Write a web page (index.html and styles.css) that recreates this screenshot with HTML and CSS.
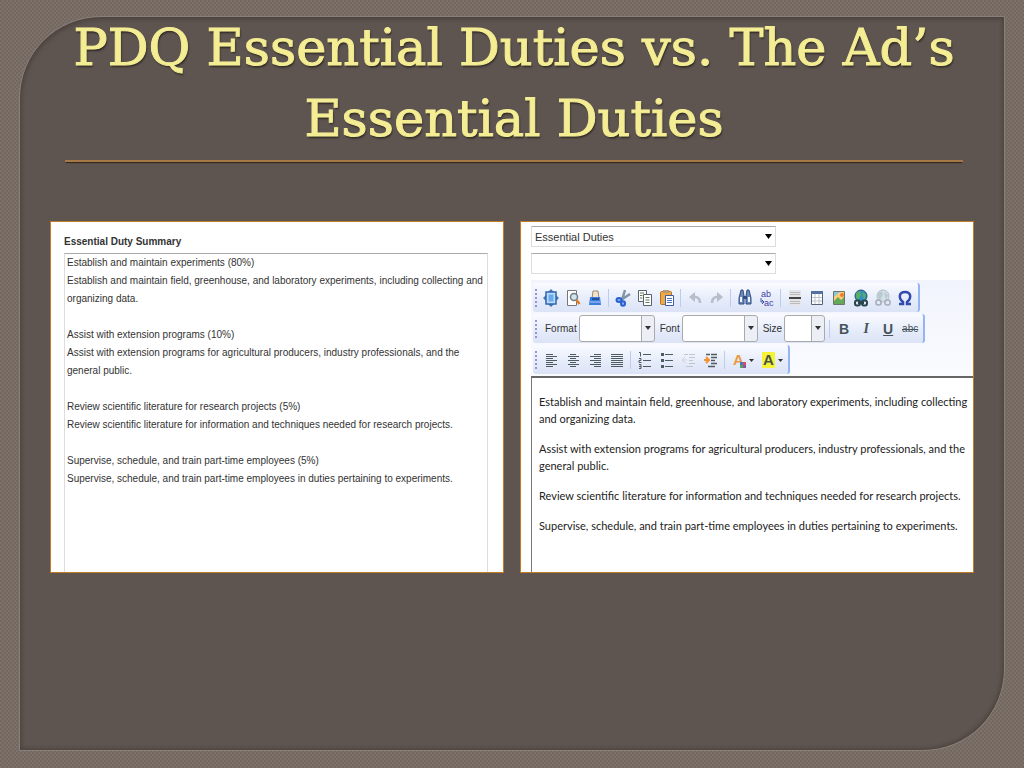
FILE: index.html
```
<!DOCTYPE html>
<html lang="en">
<head>
    <meta charset="UTF-8">
    <meta name="viewport" content="width=device-width, initial-scale=1.0">
    <title>PDQ Essential Duties vs. The Ad’s Essential Duties</title>
    <link rel="stylesheet" href="styles.css">
</head>
<body>
    <main class="slide">
        <h1 class="title">PDQ Essential Duties vs. The Ad’s Essential Duties</h1>

        <div class="panels">
            <!-- Summary from the PDQ -->
            <section class="panel summary">
                <label for="dutySummary">Essential Duty Summary</label>
                <textarea id="dutySummary" spellcheck="false">Establish and maintain experiments (80%)
Establish and maintain field, greenhouse, and laboratory experiments, including collecting and organizing data.

Assist with extension programs (10%)
Assist with extension programs for agricultural producers, industry professionals, and the general public.

Review scientific literature for research projects (5%)
Review scientific literature for information and techniques needed for research projects.

Supervise, schedule, and train part-time employees (5%)
Supervise, schedule, and train part-time employees in duties pertaining to experiments.</textarea>
            </section>

            <!-- Editor for the ad -->
            <section class="panel editor">
                <div class="fields">
                    <select class="field" aria-label="Section">
                        <option>Essential Duties</option>
                    </select>
                    <select class="field" aria-label="Template">
                        <option></option>
                    </select>
                </div>

                <div class="toolbars">
                    <div class="toolbar">
                        <button class="tool" aria-label="Maximize"><svg viewBox="0 0 16 18"><path d="M8 0l3 3H5zM8 18l3-3H5zM0 9l3-3v6zM16 9l-3-3v6z" fill="#3e79b8"/><rect x="3" y="3" width="10" height="12" fill="#b9dcff" stroke="#3566ae" stroke-width="1.5"/><rect x="5.5" y="5.5" width="5" height="7" fill="#6caaf0"/></svg></button>
                        <button class="tool" aria-label="Preview"><svg viewBox="0 0 16 18"><path d="M2.5 1.5h9v15h-9z" fill="#fff" stroke="#777"/><circle cx="9" cy="8" r="3.5" fill="#d5e3ea" stroke="#6c7f86" stroke-width="1.5"/><path d="M11.5 11l3 4" stroke="#e17b23" stroke-width="2.5"/></svg></button>
                        <button class="tool" aria-label="Print"><svg viewBox="0 0 16 18"><path d="M6 2h5l1 8H5z" fill="#f5e2c8" stroke="#9b8a79"/><path d="M3 8h10l1 8H2z" fill="#3f7ddd"/><path d="M5 9h7v2H5z" fill="#24509c"/><path d="M3 13h10" stroke="#a9d0ff"/></svg></button>
                        <span class="divider"></span>
                        <button class="tool" aria-label="Cut"><svg viewBox="0 0 16 18"><path d="M10 1L7 11M15 5l-9 6" stroke="#8194a8" stroke-width="2.5" fill="none"/><ellipse cx="4" cy="11" rx="2.5" ry="2" fill="#8bb0ee" stroke="#2962ce" stroke-width="2"/><ellipse cx="8" cy="14.500" rx="2" ry="2.300" fill="#8bb0ee" stroke="#2962ce" stroke-width="2"/></svg></button>
                        <button class="tool" aria-label="Copy"><svg viewBox="0 0 16 18"><g fill="#fff" stroke="#59646a"><path d="M1.5 1.5h8v11h-8z"/><path d="M6.5 5.5h8v11h-8z"/></g><path d="M3 4h4M3 6.5h2.500M3 9h2.500M8.500 8.500h4M8.500 11h4M8.500 13.500h4" stroke="#617956"/></svg></button>
                        <button class="tool" aria-label="Paste"><svg viewBox="0 0 16 18"><rect x="1.5" y="2.5" width="11" height="13" rx="1" fill="#eda848" stroke="#b57424"/><path d="M4 1h6v3H4z" fill="#b99a77"/><path d="M6.5 6.5h8v10h-8z" fill="#fff" stroke="#3e5da5"/><path d="M8 9.500h5M8 11.500h5M8 13.500h5" stroke="#4b76bd"/></svg></button>
                        <span class="divider"></span>
                        <button class="tool" aria-label="Undo" disabled><svg viewBox="0 0 16 18"><path d="M4 8h5q4 1 4 6" fill="none" stroke="#b8bdc9" stroke-width="2.5"/><path d="M8 3L2 8l6 5z" fill="#b8bdc9"/></svg></button>
                        <button class="tool" aria-label="Redo" disabled><svg viewBox="0 0 16 18"><path d="M12 8H7q-4 1-4 6" fill="none" stroke="#b8bdc9" stroke-width="2.5"/><path d="M8 3l6 5-6 5z" fill="#b8bdc9"/></svg></button>
                        <span class="divider"></span>
                        <button class="tool" aria-label="Find"><svg viewBox="0 0 16 18"><path d="M4 1h2l1 6v8H2V9zM12 1h-2L9 7v8h5V9z" fill="#6a88bd" stroke="#334f82"/><path d="M6 7h4v3H6z" fill="#334f82"/><path d="M4 8v5M12 8v5" stroke="#edf4ff" stroke-width="2"/></svg></button>
                        <button class="tool" aria-label="Replace"><svg viewBox="0 0 16 18"><text x="2" y="8" font-size="9" fill="#4440a4">ab</text><text x="5" y="17" font-size="9" fill="#4440a4">ac</text><path d="M2 9v4h3M3 11l2 2-2 2" fill="none" stroke="#3857b0"/></svg></button>
                        <span class="divider"></span>
                        <button class="tool" aria-label="Insert horizontal line"><svg viewBox="0 0 16 18"><path d="M2 1h12v16H2z" fill="#e5e5e9"/><path d="M3 3.500h10M3 5.500h10M3 12.500h10M3 14.500h10" stroke="#bbb"/><path d="M2 9h12" stroke="#444" stroke-width="2"/></svg></button>
                        <button class="tool" aria-label="Table"><svg viewBox="0 0 16 18"><path d="M2.5 2.5h11v13h-11z" fill="#fff" stroke="#566372"/><path d="M2 2h12v3H2z" fill="#54709e"/><path d="M6 5v10M10 5v10M3 8.500h10M3 12h10" stroke="#bbc5d0"/></svg></button>
                        <button class="tool" aria-label="Image"><svg viewBox="0 0 16 18"><path d="M2.5 2.5h11v13h-11z" fill="#ffcd76" stroke="#68776a"/><path d="M3 12l4-4 3 3 3-3v7H3z" fill="#64a958"/><path d="M3 3h6L3 8z" fill="#8ec3d8"/><circle cx="11" cy="6" r="2" fill="#f17a2d"/></svg></button>
                        <button class="tool" aria-label="Link"><svg viewBox="0 0 16 18"><circle cx="8" cy="7" r="6" fill="#348ec2" stroke="#245172"/><path d="M3 4l4-2 1 4-3 5-2-3zM9 3l4 3-2 5z" fill="#58ad63"/><rect x="2" y="11.500" width="5" height="5" rx="2" fill="none" stroke="#294749" stroke-width="2"/><rect x="9" y="11.500" width="5" height="5" rx="2" fill="none" stroke="#294749" stroke-width="2"/><path d="M5 14h6" stroke="#294749" stroke-width="2"/></svg></button>
                        <button class="tool" aria-label="Unlink" disabled><svg viewBox="0 0 16 18"><circle cx="8" cy="7" r="6" fill="#d5dfe9" stroke="#b2bdc9"/><path d="M3 4l4-2 1 4-3 5-2-3zM9 3l4 3-2 5z" fill="#b9cbd0"/><rect x="1" y="11" width="5" height="5" rx="2" fill="none" stroke="#a5acb7" stroke-width="1.5"/><rect x="10" y="11" width="5" height="5" rx="2" fill="none" stroke="#a5acb7" stroke-width="1.5"/></svg></button>
                        <button class="tool" aria-label="Special character"><svg viewBox="0 0 16 18"><path d="M2 15h4v-2C1 9 2 3 8 3s7 6 2 10v2h4" fill="none" stroke="#3349ae" stroke-width="2.5"/></svg></button>
                    </div>

                    <div class="toolbar">
                        <label for="format">Format</label>
                        <select id="format" class="combo"><option></option></select>
                        <label for="font">Font</label>
                        <select id="font" class="combo"><option></option></select>
                        <label for="size">Size</label>
                        <select id="size" class="combo small"><option></option></select>
                        <span class="divider"></span>
                        <button class="tool bold">B</button>
                        <button class="tool italic">I</button>
                        <button class="tool underline">U</button>
                        <button class="tool strike">abc</button>
                    </div>

                    <div class="toolbar">
                        <button class="tool" aria-label="Align left"><svg viewBox="0 0 16 18"><path d="M3 3.500h7M3 5.500h11M3 7.500h7M3 9.500h11M3 11.500h7M3 13.500h11M3 15.500h7" stroke="#4e5b60"/></svg></button>
                        <button class="tool" aria-label="Center"><svg viewBox="0 0 16 18"><path d="M5 3.500h6M3 5.500h11M5 7.500h6M3 9.500h11M5 11.500h6M3 13.500h11M5 15.500h6" stroke="#4e5b60"/></svg></button>
                        <button class="tool" aria-label="Align right"><svg viewBox="0 0 16 18"><path d="M7 3.500h7M3 5.500h11M7 7.500h7M3 9.500h11M7 11.500h7M3 13.500h11M7 15.500h7" stroke="#4e5b60"/></svg></button>
                        <button class="tool" aria-label="Justify"><svg viewBox="0 0 16 18"><path d="M2 3.500h12M2 5.500h12M2 7.500h12M2 9.500h12M2 11.500h12M2 13.500h12M2 15.500h12" stroke="#4e5b60"/></svg></button>
                        <span class="divider"></span>
                        <button class="tool" aria-label="Numbered list"><svg viewBox="0 0 16 18"><path d="M6 3.500h8M6 9.500h8M6 15.500h8" stroke="#4e5b60"/><path d="M2 1.500h1.500v4M2 7.500h2v2H2v2h2.500M2 13.500h2v4H2M2 15.500h2" fill="none" stroke="#4e5b60"/></svg></button>
                        <button class="tool" aria-label="Bulleted list"><svg viewBox="0 0 16 18"><path d="M6 3.500h8M6 9.500h8M6 15.500h8" stroke="#4e5b60"/><path d="M2 2h3v3H2zM2 8h3v3H2zM2 14h3v3H2z" fill="#4e5b60"/></svg></button>
                        <button class="tool" aria-label="Decrease indent" disabled><svg viewBox="0 0 16 18"><path d="M3 3.500h4M8 3.500h6M8 6.500h6M8 9.500h4M8 12.500h6M5 15.500h7" stroke="#c3c6cf"/><path d="M1 9h5M4 6L1 9l3 3" fill="none" stroke="#d5d0d3"/></svg></button>
                        <button class="tool" aria-label="Increase indent"><svg viewBox="0 0 16 18"><path d="M3 3.500h4M8 3.500h6M8 6.500h6M8 9.500h4M8 12.500h6M5 15.500h7" stroke="#4e5b60" stroke-width="1.5"/><path d="M1 9h4M3 6l3 3-3 3" fill="none" stroke="#f09334" stroke-width="2"/></svg></button>
                        <span class="divider"></span>
                        <button class="tool wide" aria-label="Text color"><svg viewBox="0 0 22 18"><text x="1" y="14" font-size="15" font-weight="bold" fill="#e99a45">A</text><path d="M8 11h3v3H8z" fill="#4179c5"/><path d="M11 11h3v3h-3z" fill="#d84d68"/><path d="M8 14h3v3H8z" fill="#57a54d"/><path d="M11 14h3v3h-3z" fill="#8b50ae"/><path d="M17 8h5l-2.500 3z" fill="#333"/></svg></button>
                        <button class="tool wide" aria-label="Background color"><svg viewBox="0 0 22 18"><path d="M1 1h13v16H1z" fill="#f5f237"/><text x="2" y="14" font-size="15" font-weight="bold" fill="#48534a">A</text><path d="M17 8h5l-2.500 3z" fill="#333"/></svg></button>
                    </div>
                </div>

                <div class="document" contenteditable="true" spellcheck="false">
                    <p>Establish and maintain field, greenhouse, and laboratory experiments, including collecting<br>and organizing data.</p>
                    <p>Assist with extension programs for agricultural producers, industry professionals, and the<br>general public.</p>
                    <p>Review scientific literature for information and techniques needed for research projects.</p>
                    <p>Supervise, schedule, and train part-time employees in duties pertaining to experiments.</p>
                </div>
            </section>
        </div>
    </main>
</body>
</html>
```
FILE: styles.css
```
* {
    box-sizing: border-box;
}

body {
    margin: 0;
    min-height: 100vh;
    padding: 16px 19px 17px 19px;
    display: flex;
    background: repeating-conic-gradient(#7d7169 0% 25%, #736860 0% 50%) 0 0 / 4px 4px;
    font-family: "Liberation Sans", Arial, sans-serif;
    font-size: 10px;
    color: #333;
}

.slide {
    flex: 1;
    padding: 0 30px 40px;
    background-color: #5e5550;
    border: 1px solid #8b8079;
    border-radius: 82px 0 82px 0;
    box-shadow: inset 1px 2px 5px #4b423e, inset -1px -1px 4px #4b423e;
}

.title {
    margin: -5px 11px 0 15px;
    padding-bottom: 6px;
    border-bottom: 2px solid #a67846;
    box-shadow: 0 2px 1px -1px #352a22;
    font-family: Rockwell, "DejaVu Serif", serif;
    font-size: 51px;
    font-weight: normal;
    line-height: 71px;
    text-align: center;
    color: #f4ed94;
    -webkit-text-stroke: 1px #f4ed94;
    text-shadow: 1px 2px 2px #2e2823;
}

.panels {
    display: grid;
    grid-template-columns: 1fr 1fr;
    gap: 16px;
    margin-top: 59px;
}

.panel {
    min-width: 0;
    min-height: 352px;
    display: flex;
    flex-direction: column;
    background-color: white;
    border: 1px solid #c17d26;
}

/* Summary */
.summary {
    padding: 12px 15px 0 13px;
}

.summary label {
    font-weight: bold;
    line-height: 16px;
}

textarea {
    flex: 1;
    margin-top: 3px;
    padding: 0 2px;
    border: 1px solid #ddd;
    border-top-color: #aaa;
    border-bottom: none;
    resize: none;
    overflow: hidden;
    font: inherit;
    line-height: 18px;
    color: #333;
}

/* Editor */
.editor {
    padding: 4px 0 0 10px;
}

select {
    appearance: none;
    font: inherit;
    color: #333;
    border: 1px solid #ddd;
    background: white url("data:image/svg+xml,%3Csvg xmlns='http://www.w3.org/2000/svg' width='7' height='5'%3E%3Cpath d='M0 0h7L3.500 5z'/%3E%3C/svg%3E") no-repeat right 3px center;
}

.fields {
    display: flex;
    flex-direction: column;
    gap: 6px;
    margin-bottom: 6px;
}

.field {
    width: 245px;
    height: 21px;
    padding: 0 3px;
    border-top-color: #aaa;
    font-size: 11px;
}

.toolbars {
    display: flex;
    flex-direction: column;
    align-items: flex-start;
    gap: 2px;
    padding: 3px 0 2px 2px;
    background: linear-gradient(#f1f4fc, #fafbff);
}

.toolbar {
    display: flex;
    align-items: center;
    height: 29px;
    padding: 0 2px;
    background: linear-gradient(#f9fbff, #e5ebfa 60%, #dbe3f6);
    border-right: 2px solid #94b5f2;
    border-radius: 3px;
}

/* Dotted grip */
.toolbar::before {
    content: "";
    height: 18px;
    margin-right: 3px;
    border-left: 2px dotted #9a92d2;
}

.toolbar label {
    margin: 0 2px 0 5px;
}

.divider {
    width: 1px;
    height: 18px;
    margin: 0 3px 0 2px;
    background-color: #bccbf0;
}

.tool {
    width: 22px;
    height: 24px;
    padding: 0;
    display: flex;
    align-items: center;
    justify-content: center;
    border: none;
    background: none;
    color: #46545a;
    font-family: "Liberation Sans", Arial, sans-serif;
    font-size: 14px;
}

.tool svg {
    width: 16px;
    height: 18px;
    overflow: visible;
}

.wide {
    width: 29px;
}

.wide svg {
    width: 22px;
}

.bold,
.underline {
    font-weight: bold;
}

.italic {
    font-family: "Liberation Serif", serif;
    font-style: italic;
    font-weight: bold;
}

.underline {
    text-decoration: underline;
}

.strike {
    font-size: 10px;
    text-decoration: line-through;
}

.combo {
    width: 76px;
    height: 27px;
    border-color: #aaa;
    border-radius: 3px;
    background-image: url("data:image/svg+xml,%3Csvg xmlns='http://www.w3.org/2000/svg' width='13' height='27'%3E%3Cpath d='M0 0h13v27H0z' fill='%23eceff6'/%3E%3Cpath d='M0 0h1v27H0z' fill='%23aaa'/%3E%3Cpath d='M4 11h6l-3 4z' fill='%23333'/%3E%3C/svg%3E");
    background-position: right center;
}

.small {
    width: 41px;
    margin-right: 2px;
}

.document {
    flex: 1;
    padding: 15px 0 0 7px;
    border-top: 2px solid #666;
    border-left: 1px solid #777;
    outline: none;
    font-family: Lato, "Liberation Sans", sans-serif;
    font-size: 11px;
    line-height: 17px;
    color: #222;
}

.document p {
    margin: 0 0 13px;
}
```
